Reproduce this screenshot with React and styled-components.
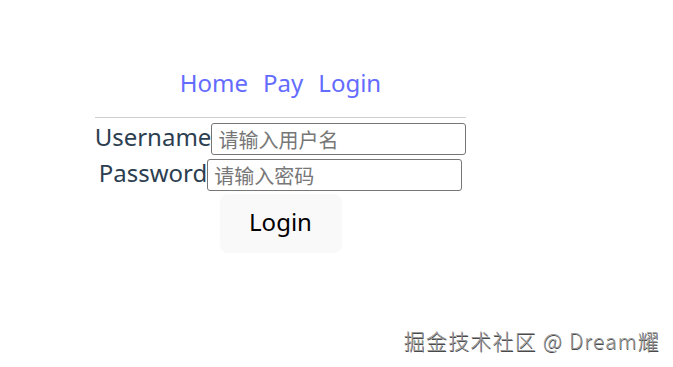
import React from "react";
import styled, { createGlobalStyle } from "styled-components";

const GlobalStyle = createGlobalStyle`
  body {
    margin: 0;
    background: #ffffff;
    font-family: "Noto Sans", "Noto Sans CJK SC", sans-serif;
    color: #2c3e50;
  }
`;

const Page = styled.div`
  position: relative;
  width: 673px;
  height: 367px;
  overflow: hidden;
  padding-top: 62px;
  box-sizing: border-box;
`;

const Container = styled.div`
  width: 371px;
  margin-left: 95px;
  display: flex;
  flex-direction: column;
  align-items: center;
`;

const Nav = styled.nav`
  height: 40px;
  display: flex;
  gap: 15px;
  align-items: center;
  justify-content: center;
`;

const NavLink = styled.a`
  color: #646cff;
  font-size: 24px;
  text-decoration: none;
  cursor: pointer;
`;

const Divider = styled.div`
  width: 100%;
  height: 1px;
  margin-top: 15px;
  margin-bottom: 3px;
  background: #cfcfcf;
`;

const Row = styled.div`
  height: 36px;
  display: flex;
  align-items: center;
  justify-content: center;
`;

const Label = styled.label`
  font-size: 24px;
  line-height: 28px;
  margin-bottom: 5px;
  color: #2c3e50;
  white-space: nowrap;
`;

const Input = styled.input`
  width: 255px;
  height: 32px;
  box-sizing: border-box;
  border: 1px solid #767676;
  border-radius: 3px;
  padding: 0 6px;
  font-size: 20px;
  font-family: "Noto Sans CJK SC", sans-serif;
  color: #222;
  &::placeholder {
    color: #777;
  }
`;

const Button = styled.button`
  margin-top: 1px;
  width: 122px;
  height: 59px;
  padding: 0 0 5px;
  border: none;
  border-radius: 8px;
  background: #f9f9f9;
  color: #000;
  font-size: 24px;
  font-family: "Noto Sans", sans-serif;
  cursor: pointer;
`;

const Watermark = styled.div`
  position: absolute;
  right: 13px;
  bottom: 12px;
  font-size: 21px;
  font-weight: 300;
  color: #9a9a9a;
  font-family: "Noto Sans CJK SC", sans-serif;
  text-shadow: 0.5px 0.5px 0 #4a4a4a;
  letter-spacing: 1.2px;
`;

export default function App() {
  return (
    <>
      <GlobalStyle />
      <Page>
        <Container>
          <Nav>
            <NavLink>Home</NavLink>
            <NavLink>Pay</NavLink>
            <NavLink>Login</NavLink>
          </Nav>
          <Divider />
          <Row>
            <Label>Username</Label>
            <Input placeholder="请输入用户名" />
          </Row>
          <Row>
            <Label>Password</Label>
            <Input placeholder="请输入密码" />
          </Row>
          <Button>Login</Button>
        </Container>
        <Watermark>掘金技术社区 @ Dream耀</Watermark>
      </Page>
    </>
  );
}
